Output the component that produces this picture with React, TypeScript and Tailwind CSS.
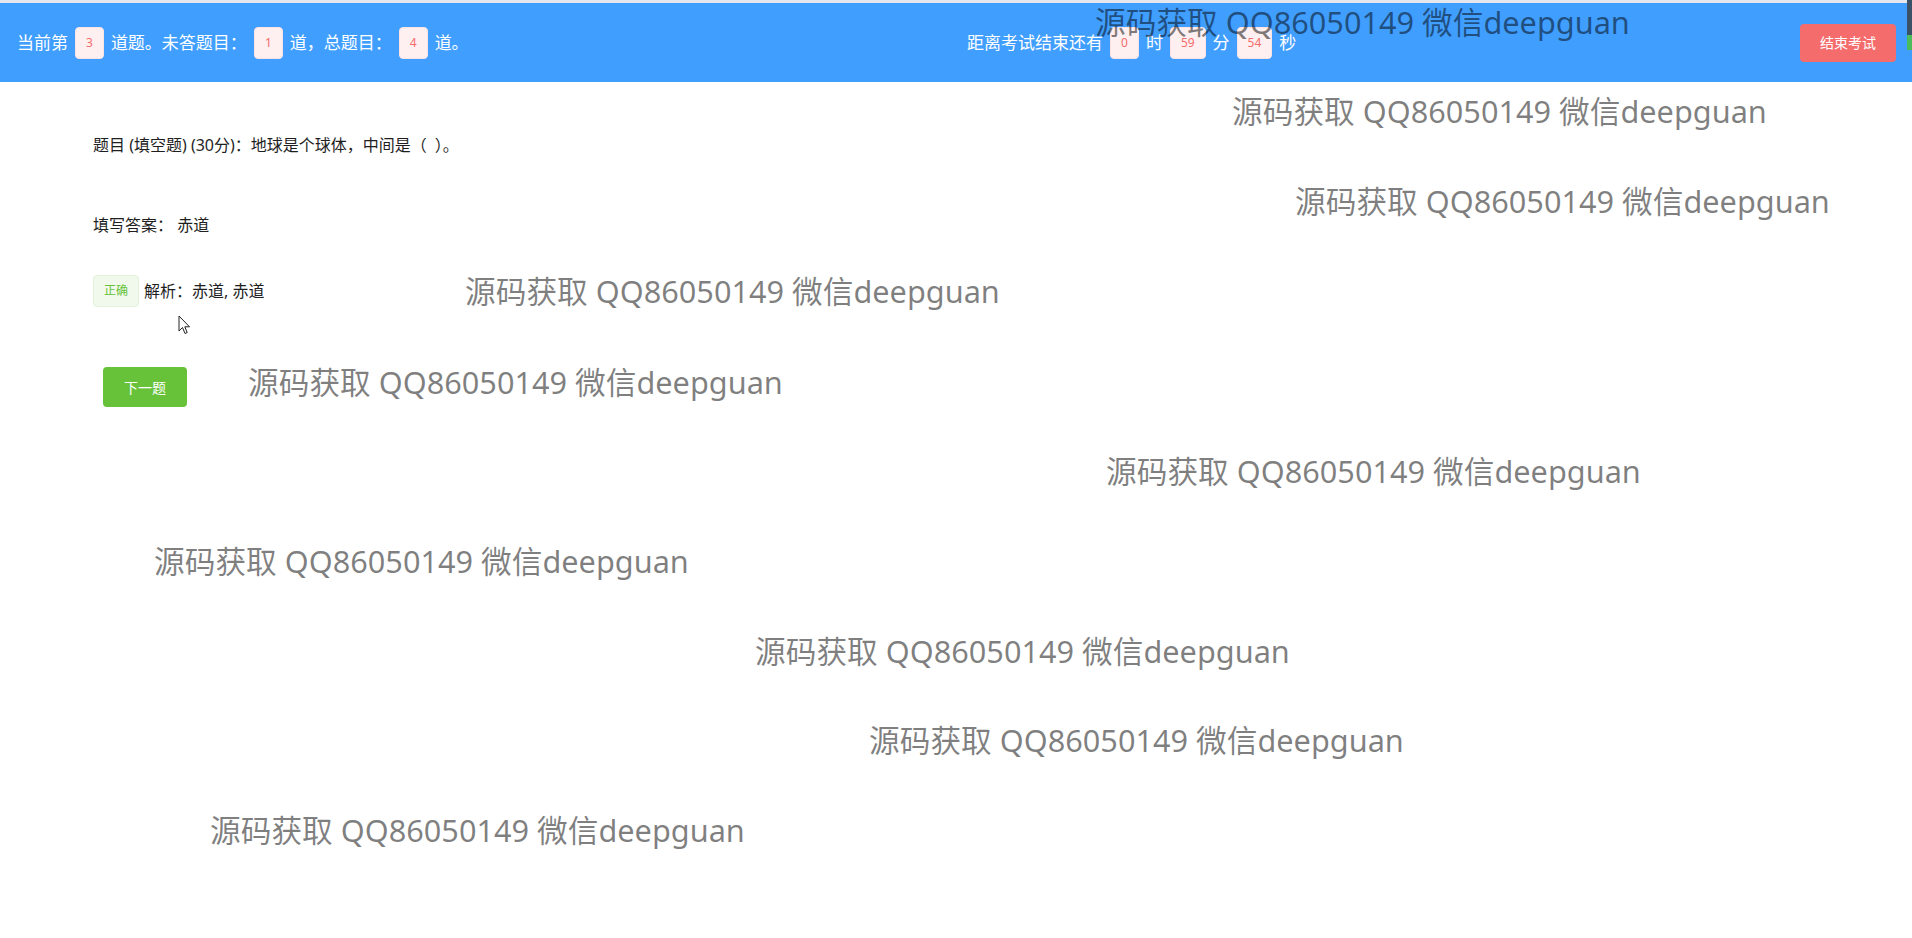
import React from "react";

const FONT = '"Noto Sans", "Noto Sans CJK SC", sans-serif';

function Tag({ children }: { children: React.ReactNode }) {
  return (
    <span className="mx-[7px] inline-flex h-8 items-center rounded-[4px] border border-[#fde2e2] bg-[#fef0f0] px-[10px] text-[12px] text-[#f56c6c]">
      {children}
    </span>
  );
}

const marks: { left: number; top: number }[] = [
  { left: 1095, top: 4 },
  { left: 1232, top: 93 },
  { left: 1295, top: 183 },
  { left: 465, top: 273 },
  { left: 248, top: 364 },
  { left: 1106, top: 453 },
  { left: 154, top: 543 },
  { left: 755, top: 633 },
  { left: 869, top: 722 },
  { left: 210, top: 812 },
];

export default function App() {
  return (
    <div
      className="relative h-[938px] w-full overflow-hidden bg-white text-[16px] text-[#1f1f1f]"
      style={{ fontFamily: FONT }}
    >
      <div className="h-[3px] bg-[#e4e7ed]" />
      <header className="flex h-[79px] items-center bg-[#409eff] text-[17px] text-white">
        <div className="flex w-1/2 items-center pl-[17px]">
          <span>当前第</span>
          <Tag>3</Tag>
          <span>道题。未答题目：</span>
          <Tag>1</Tag>
          <span>道，总题目：</span>
          <Tag>4</Tag>
          <span>道。</span>
        </div>
        <div className="flex flex-1 items-center pl-[11px]">
          <span>距离考试结束还有</span>
          <Tag>0</Tag>
          <span>时</span>
          <Tag>59</Tag>
          <span>分</span>
          <Tag>54</Tag>
          <span>秒</span>
          <button className="ml-auto mr-[16px] h-[38px] w-[96px] rounded-[4px] bg-[#f56c6c] text-[14px] text-white">
            结束考试
          </button>
        </div>
      </header>

      <main className="pl-[93px]">
        <p className="mt-[51px] leading-[24px]">
          题目 (填空题) (30分)：地球是个球体，中间是（{"\u2002"}）。
        </p>
        <p className="mt-[56px] leading-[24px]">填写答案： 赤道</p>
        <div className="mt-[38px] flex h-8 items-center">
          <span className="mr-[5px] inline-flex h-8 items-center rounded-[4px] border border-[#e1f3d8] bg-[#f0f9eb] px-[10px] text-[12px] text-[#67c23a]">
            正确
          </span>
          <span>解析：赤道, 赤道</span>
        </div>
        <button className="ml-[10px] mt-[60px] h-[40px] w-[84px] rounded-[4px] bg-[#67c23a] text-[14px] text-white">
          下一题
        </button>
      </main>

      {marks.map((m, i) => (
        <div
          key={i}
          className="pointer-events-none absolute whitespace-nowrap text-[30.7px] leading-[36px] text-black/50"
          style={{ left: m.left, top: m.top }}
        >
          源码获取 QQ86050149 微信deepguan
        </div>
      ))}

      <svg
        className="pointer-events-none absolute left-[178px] top-[315px]"
        width="14"
        height="21"
        viewBox="0 0 14 21"
      >
        <path
          d="M1 1 L1 16 L4.5 12.5 L7 18.5 L9.2 17.6 L6.8 11.8 L11.5 11.8 Z"
          fill="white"
          stroke="#222"
          strokeWidth="1"
          strokeLinejoin="round"
        />
      </svg>

      <div className="absolute right-0 top-0 flex h-[50px] w-[5px] flex-col">
        <div className="h-[35px] bg-[#3b5166]" />
        <div className="h-[15px] bg-[#4cbb5a]" />
      </div>
    </div>
  );
}
